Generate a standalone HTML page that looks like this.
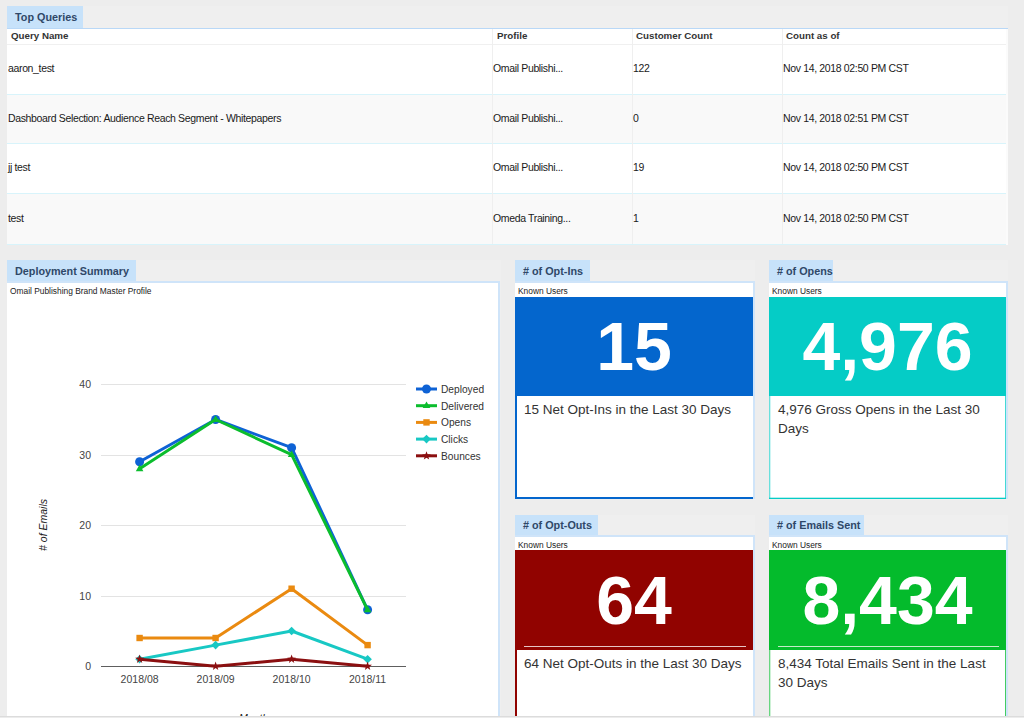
<!DOCTYPE html>
<html><head><meta charset="utf-8">
<style>
*{box-sizing:border-box;margin:0;padding:0}
html,body{width:1024px;height:718px;overflow:hidden;background:#ededed;font-family:"Liberation Sans",sans-serif;position:relative}
.abs{position:absolute}
.cont{position:absolute;background:#efefef}
.tab{position:absolute;background:#c7e2fa;color:#2f4868;font-weight:bold;font-size:10.8px;line-height:22px;padding-left:8px;white-space:nowrap}
.hd{position:absolute;height:15px;font-weight:bold;color:#333;line-height:15px;white-space:nowrap;font-size:9.75px}
.cell{position:absolute;display:flex;align-items:center;white-space:nowrap;font-size:10.5px;letter-spacing:-0.35px;color:#1a1a1a}
.ku{position:absolute;font-size:8.4px;line-height:10px;color:#222;white-space:nowrap}
.big{position:absolute;color:#fff;font-weight:bold;font-size:68px;text-align:center;white-space:nowrap}
.desc{position:absolute;font-size:13.5px;line-height:18.6px;color:#333}
</style></head><body>
<div class="cont" style="left:7px;top:6px;width:1001px;height:239px"></div>
<div class="tab" style="left:7px;top:6px;width:76px;height:22px">Top Queries</div>
<div class="abs" style="left:7px;top:28px;width:1001px;height:1px;background:#b9d8f7"></div>
<div class="abs" style="left:7px;top:29px;width:999px;height:15px;background:#fff"></div>
<div class="abs" style="left:7px;top:44px;width:999px;height:1px;background:#f0f0f0"></div>
<div class="abs" style="left:7px;top:45px;width:999px;height:49px;background:#fff"></div>
<div class="abs" style="left:7px;top:94px;width:999px;height:1px;background:#d8f4fb"></div>
<div class="abs" style="left:7px;top:95px;width:999px;height:48px;background:#f9f9f9"></div>
<div class="abs" style="left:7px;top:143px;width:999px;height:1px;background:#d8f4fb"></div>
<div class="abs" style="left:7px;top:144px;width:999px;height:49px;background:#fff"></div>
<div class="abs" style="left:7px;top:193px;width:999px;height:1px;background:#d8f4fb"></div>
<div class="abs" style="left:7px;top:194px;width:999px;height:50px;background:#f9f9f9"></div>
<div class="abs" style="left:7px;top:244px;width:999px;height:1px;background:#d8f4fb"></div>
<div class="abs" style="left:1006px;top:29px;width:2px;height:216px;background:#fbfbfb"></div>
<div class="abs" style="left:492px;top:29px;width:1px;height:215px;background:#efefef"></div>
<div class="abs" style="left:632px;top:29px;width:1px;height:215px;background:#efefef"></div>
<div class="abs" style="left:782px;top:29px;width:1px;height:215px;background:#efefef"></div>
<div class="hd" style="left:11px;top:28px">Query Name</div>
<div class="hd" style="left:497px;top:28px">Profile</div>
<div class="hd" style="left:636px;top:28px">Customer Count</div>
<div class="hd" style="left:786px;top:28px">Count as of</div>
<div class="cell" style="left:8px;top:43.5px;height:49px">aaron_test</div>
<div class="cell" style="left:493px;top:43.5px;height:49px">Omail Publishi...</div>
<div class="cell" style="left:633px;top:43.5px;height:49px">122</div>
<div class="cell" style="left:783px;top:43.5px;height:49px">Nov 14, 2018 02:50 PM CST</div>
<div class="cell" style="left:8px;top:93.5px;height:48px">Dashboard Selection: Audience Reach Segment - Whitepapers</div>
<div class="cell" style="left:493px;top:93.5px;height:48px">Omail Publishi...</div>
<div class="cell" style="left:633px;top:93.5px;height:48px">0</div>
<div class="cell" style="left:783px;top:93.5px;height:48px">Nov 14, 2018 02:51 PM CST</div>
<div class="cell" style="left:8px;top:142.5px;height:49px">jj test</div>
<div class="cell" style="left:493px;top:142.5px;height:49px">Omail Publishi...</div>
<div class="cell" style="left:633px;top:142.5px;height:49px">19</div>
<div class="cell" style="left:783px;top:142.5px;height:49px">Nov 14, 2018 02:50 PM CST</div>
<div class="cell" style="left:8px;top:192.5px;height:50px">test</div>
<div class="cell" style="left:493px;top:192.5px;height:50px">Omeda Training...</div>
<div class="cell" style="left:633px;top:192.5px;height:50px">1</div>
<div class="cell" style="left:783px;top:192.5px;height:50px">Nov 14, 2018 02:50 PM CST</div>
<div class="cont" style="left:7px;top:260px;width:494px;height:458px"></div>
<div class="tab" style="left:7px;top:260px;width:129px;height:22px">Deployment Summary</div>
<div class="abs" style="left:7px;top:281px;width:493px;height:435px;background:#fff;border-top:2px solid #cfe4f9;border-right:2px solid #cfe4f9"></div>
<div class="ku" style="left:10px;top:286px;font-size:8.4px">Omail Publishing Brand Master Profile</div>
<svg class="abs" style="left:0;top:0" width="510" height="716" viewBox="0 0 510 716">
<line x1="101" y1="596.5" x2="406" y2="596.5" stroke="#e3e3e3" stroke-width="1"/>
<line x1="101" y1="525.5" x2="406" y2="525.5" stroke="#e3e3e3" stroke-width="1"/>
<line x1="101" y1="455.5" x2="406" y2="455.5" stroke="#e3e3e3" stroke-width="1"/>
<line x1="101" y1="384.5" x2="406" y2="384.5" stroke="#e3e3e3" stroke-width="1"/>
<line x1="101" y1="666.5" x2="406" y2="666.5" stroke="#5e5e5e" stroke-width="1"/>
<text x="91" y="670.0" text-anchor="end" font-size="10.5" fill="#444">0</text>
<text x="91" y="599.5" text-anchor="end" font-size="10.5" fill="#444">10</text>
<text x="91" y="529.0" text-anchor="end" font-size="10.5" fill="#444">20</text>
<text x="91" y="458.5" text-anchor="end" font-size="10.5" fill="#444">30</text>
<text x="91" y="388.0" text-anchor="end" font-size="10.5" fill="#444">40</text>
<text x="139.6" y="682.5" text-anchor="middle" font-size="10.5" fill="#444">2018/08</text>
<text x="215.6" y="682.5" text-anchor="middle" font-size="10.5" fill="#444">2018/09</text>
<text x="291.6" y="682.5" text-anchor="middle" font-size="10.5" fill="#444">2018/10</text>
<text x="367.6" y="682.5" text-anchor="middle" font-size="10.5" fill="#444">2018/11</text>
<polyline points="139.6,461.8 215.6,419.5 291.6,447.7 367.6,609.8" fill="none" stroke="#0e62d5" stroke-width="3" stroke-linejoin="round"/>
<circle cx="139.6" cy="461.8" r="4.5" fill="#0e62d5"/>
<circle cx="215.6" cy="419.5" r="4.5" fill="#0e62d5"/>
<circle cx="291.6" cy="447.7" r="4.5" fill="#0e62d5"/>
<circle cx="367.6" cy="609.8" r="4.5" fill="#0e62d5"/>
<polyline points="139.6,468.8 215.6,419.5 291.6,454.7 367.6,609.8" fill="none" stroke="#0bbd2d" stroke-width="3" stroke-linejoin="round"/>
<path d="M139.6 464.6L143.4 471.2L135.8 471.2Z" fill="#0bbd2d"/>
<path d="M215.6 415.3L219.4 421.9L211.8 421.9Z" fill="#0bbd2d"/>
<path d="M291.6 450.5L295.4 457.1L287.8 457.1Z" fill="#0bbd2d"/>
<path d="M367.6 605.6L371.4 612.2L363.8 612.2Z" fill="#0bbd2d"/>
<polyline points="139.6,638.0 215.6,638.0 291.6,588.7 367.6,645.1" fill="none" stroke="#ea8a10" stroke-width="3" stroke-linejoin="round"/>
<rect x="136.4" y="634.8" width="6.4" height="6.4" fill="#ea8a10"/>
<rect x="212.4" y="634.8" width="6.4" height="6.4" fill="#ea8a10"/>
<rect x="288.4" y="585.5" width="6.4" height="6.4" fill="#ea8a10"/>
<rect x="364.4" y="641.9" width="6.4" height="6.4" fill="#ea8a10"/>
<polyline points="139.6,659.2 215.6,645.1 291.6,631.0 367.6,659.2" fill="none" stroke="#18c8c4" stroke-width="3" stroke-linejoin="round"/>
<path d="M139.6 654.9L143.9 659.2L139.6 663.5L135.3 659.2Z" fill="#18c8c4"/>
<path d="M215.6 640.8L219.9 645.1L215.6 649.4L211.3 645.1Z" fill="#18c8c4"/>
<path d="M291.6 626.7L295.9 631.0L291.6 635.2L287.3 631.0Z" fill="#18c8c4"/>
<path d="M367.6 654.9L371.9 659.2L367.6 663.5L363.3 659.2Z" fill="#18c8c4"/>
<polyline points="139.6,659.2 215.6,666.2 291.6,659.2 367.6,666.2" fill="none" stroke="#8b0f10" stroke-width="3" stroke-linejoin="round"/>
<path d="M139.6 654.6L140.7 657.6L144.0 657.7L141.4 659.7L142.3 662.9L139.6 661.1L136.9 662.9L137.8 659.7L135.2 657.7L138.5 657.6Z" fill="#8b0f10"/>
<path d="M215.6 661.6L216.7 664.7L220.0 664.8L217.4 666.8L218.3 669.9L215.6 668.1L212.9 669.9L213.8 666.8L211.2 664.8L214.5 664.7Z" fill="#8b0f10"/>
<path d="M291.6 654.6L292.7 657.6L296.0 657.7L293.4 659.7L294.3 662.9L291.6 661.1L288.9 662.9L289.8 659.7L287.2 657.7L290.5 657.6Z" fill="#8b0f10"/>
<path d="M367.6 661.6L368.7 664.7L372.0 664.8L369.4 666.8L370.3 669.9L367.6 668.1L364.9 669.9L365.8 666.8L363.2 664.8L366.5 664.7Z" fill="#8b0f10"/>
<line x1="416" y1="389" x2="437" y2="389" stroke="#0e62d5" stroke-width="3"/>
<circle cx="426.5" cy="389.0" r="4.5" fill="#0e62d5"/>
<text x="441" y="392.8" font-size="10.2" fill="#333">Deployed</text>
<line x1="416" y1="405.7" x2="437" y2="405.7" stroke="#0bbd2d" stroke-width="3"/>
<path d="M426.5 401.5L430.3 408.1L422.7 408.1Z" fill="#0bbd2d"/>
<text x="441" y="409.5" font-size="10.2" fill="#333">Delivered</text>
<line x1="416" y1="422.4" x2="437" y2="422.4" stroke="#ea8a10" stroke-width="3"/>
<rect x="423.3" y="419.2" width="6.4" height="6.4" fill="#ea8a10"/>
<text x="441" y="426.2" font-size="10.2" fill="#333">Opens</text>
<line x1="416" y1="439.1" x2="437" y2="439.1" stroke="#18c8c4" stroke-width="3"/>
<path d="M426.5 434.8L430.8 439.1L426.5 443.4L422.2 439.1Z" fill="#18c8c4"/>
<text x="441" y="442.9" font-size="10.2" fill="#333">Clicks</text>
<line x1="416" y1="455.8" x2="437" y2="455.8" stroke="#8b0f10" stroke-width="3"/>
<path d="M426.5 451.2L427.6 454.3L430.9 454.4L428.3 456.4L429.2 459.5L426.5 457.7L423.8 459.5L424.7 456.4L422.1 454.4L425.4 454.3Z" fill="#8b0f10"/>
<text x="441" y="459.6" font-size="10.2" fill="#333">Bounces</text>
<text transform="translate(47 525) rotate(-90)" text-anchor="middle" font-size="10.5" font-style="italic" fill="#222"># of Emails</text>
<text x="253.5" y="722" text-anchor="middle" font-size="10.5" font-style="italic" fill="#222">Month</text>
</svg>
<div class="cont" style="left:515px;top:260px;width:240px;height:240px"></div>
<div class="tab" style="left:515px;top:260px;width:75px;height:22px;line-height:22px"># of Opt-Ins</div>
<div class="abs" style="left:515px;top:281px;width:240px;height:218px;background:#fff;border-top:2px solid #cfe4f9;border-right:2px solid #cfe4f9"></div>
<div class="ku" style="left:518px;top:286px">Known Users</div>
<div class="abs" style="left:515px;top:297px;width:238px;height:99px;background:#0466cd"></div>
<div class="big" style="left:515px;top:297px;width:238px;height:99px;line-height:99px">15</div>
<div class="abs" style="left:515px;top:396px;width:2px;height:103px;background:#0466cd"></div>
<div class="abs" style="left:515px;top:497px;width:238px;height:2px;background:#0466cd"></div>
<div class="desc" style="left:524px;top:401px;width:224px">15 Net Opt-Ins in the Last 30 Days</div>
<div class="cont" style="left:769px;top:260px;width:239px;height:240px"></div>
<div class="tab" style="left:769px;top:260px;width:64px;height:22px;line-height:22px"># of Opens</div>
<div class="abs" style="left:769px;top:281px;width:239px;height:218px;background:#fff;border-top:2px solid #cfe4f9;border-right:2px solid #cfe4f9"></div>
<div class="ku" style="left:772px;top:286px">Known Users</div>
<div class="abs" style="left:769px;top:297px;width:237px;height:99px;background:#05ccc6"></div>
<div class="big" style="left:769px;top:297px;width:237px;height:99px;line-height:99px">4,976</div>
<div class="abs" style="left:769px;top:396px;width:1px;height:103px;background:#05ccc6;opacity:.6"></div>
<div class="abs" style="left:770px;top:396px;width:1px;height:103px;background:#05ccc6;opacity:.2"></div>
<div class="abs" style="left:1005px;top:396px;width:1px;height:103px;background:#05ccc6;opacity:.75"></div>
<div class="abs" style="left:769px;top:498px;width:237px;height:1px;background:#05ccc6"></div>
<div class="abs" style="left:769px;top:497px;width:237px;height:1px;background:#05ccc6;opacity:.3"></div>
<div class="desc" style="left:778px;top:401px;width:223px">4,976 Gross Opens in the Last 30 Days</div>
<div class="cont" style="left:515px;top:515px;width:240px;height:203px"></div>
<div class="tab" style="left:515px;top:515px;width:83px;height:20px;line-height:20px"># of Opt-Outs</div>
<div class="abs" style="left:515px;top:535px;width:240px;height:183px;background:#fff;border-top:2px solid #cfe4f9;border-right:2px solid #cfe4f9"></div>
<div class="ku" style="left:518px;top:540px">Known Users</div>
<div class="abs" style="left:515px;top:550px;width:238px;height:100px;background:#910300"></div>
<div class="abs" style="left:524px;top:646px;width:222px;height:1px;background:#e6c4c4"></div>
<div class="big" style="left:515px;top:550px;width:238px;height:96px;line-height:101px">64</div>
<div class="abs" style="left:515px;top:650px;width:2px;height:66px;background:#910300"></div>
<div class="desc" style="left:524px;top:655px;width:224px">64 Net Opt-Outs in the Last 30 Days</div>
<div class="cont" style="left:769px;top:515px;width:239px;height:203px"></div>
<div class="tab" style="left:769px;top:515px;width:95px;height:20px;line-height:20px"># of Emails Sent</div>
<div class="abs" style="left:769px;top:535px;width:239px;height:183px;background:#fff;border-top:2px solid #cfe4f9;border-right:2px solid #cfe4f9"></div>
<div class="ku" style="left:772px;top:540px">Known Users</div>
<div class="abs" style="left:769px;top:550px;width:237px;height:100px;background:#04bb2c"></div>
<div class="abs" style="left:778px;top:646px;width:221px;height:1px;background:#c4ecc9"></div>
<div class="big" style="left:769px;top:550px;width:237px;height:96px;line-height:101px">8,434</div>
<div class="abs" style="left:769px;top:650px;width:1px;height:66px;background:#04bb2c;opacity:.6"></div>
<div class="abs" style="left:770px;top:650px;width:1px;height:66px;background:#04bb2c;opacity:.2"></div>
<div class="abs" style="left:1005px;top:650px;width:1px;height:66px;background:#04bb2c;opacity:.75"></div>
<div class="desc" style="left:778px;top:655px;width:223px">8,434 Total Emails Sent in the Last 30 Days</div>
<div class="abs" style="left:0;top:716px;width:1024px;height:1px;background:#dcdcdc"></div>
<div class="abs" style="left:0;top:717px;width:1024px;height:1px;background:#ececec"></div>
</body></html>
